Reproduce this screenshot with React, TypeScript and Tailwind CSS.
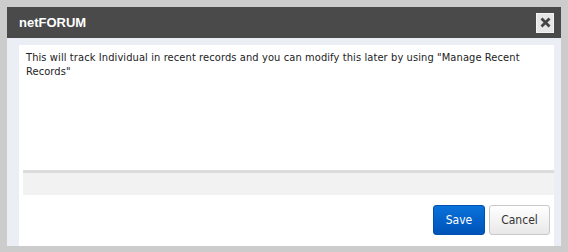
import React from "react";

export default function App() {
  return (
    <div className="w-[568px] h-[252px] bg-[#cccccc] p-[7px] pb-[6px]">
      <div className="flex flex-col h-full bg-[#ebeff5]">
        <div className="h-[31px] bg-[#4a4a4a] flex items-center justify-between pl-[12px] pr-[7px]">
          <span className="text-white font-bold text-[13px] [font-family:'Liberation_Sans',Arial,sans-serif]">netFORUM</span>
          <button className="w-[18px] h-[20px] bg-[#e6e6e6] border border-[#f4f4f4] flex items-center justify-center">
            <svg width="11" height="11" viewBox="0 0 11 11">
              <path d="M1.5 1.5 L9.5 9.5 M9.5 1.5 L1.5 9.5" stroke="#444" strokeWidth="2.8" strokeLinecap="butt" />
            </svg>
          </button>
        </div>
        <div className="flex-1 mt-[7px] ml-[12px] mr-[7px] bg-white flex flex-col">
          <div className="h-[125px] pl-[7px] pr-[4px] pt-[6px] text-[11px] leading-[14px] tracking-[0.1px] text-[#222] [font-family:'DejaVu_Sans_Condensed','DejaVu_Sans',Verdana,sans-serif]">
            This will track Individual in recent records and you can modify this later by using "Manage Recent Records"
          </div>
          <div className="ml-[4px] h-[25px] bg-[#f2f2f2] border-t-[3px] border-[#dcdcdc]" />
          <div className="flex justify-end gap-[4px] pt-[10px] pr-[4px]">
            <button className="w-[52px] h-[30px] rounded-[3px] bg-gradient-to-b from-[#0a72da] to-[#0053b9] border border-[#0050b0] text-white text-[12px] [font-family:'DejaVu_Sans_Condensed','DejaVu_Sans',Verdana,sans-serif]">
              Save
            </button>
            <button className="w-[61px] h-[30px] rounded-[3px] bg-gradient-to-b from-[#ffffff] to-[#e8e8e8] border border-[#c8c8c8] text-[#333] text-[12px] [font-family:'DejaVu_Sans_Condensed','DejaVu_Sans',Verdana,sans-serif]">
              Cancel
            </button>
          </div>
        </div>
      </div>
    </div>
  );
}
